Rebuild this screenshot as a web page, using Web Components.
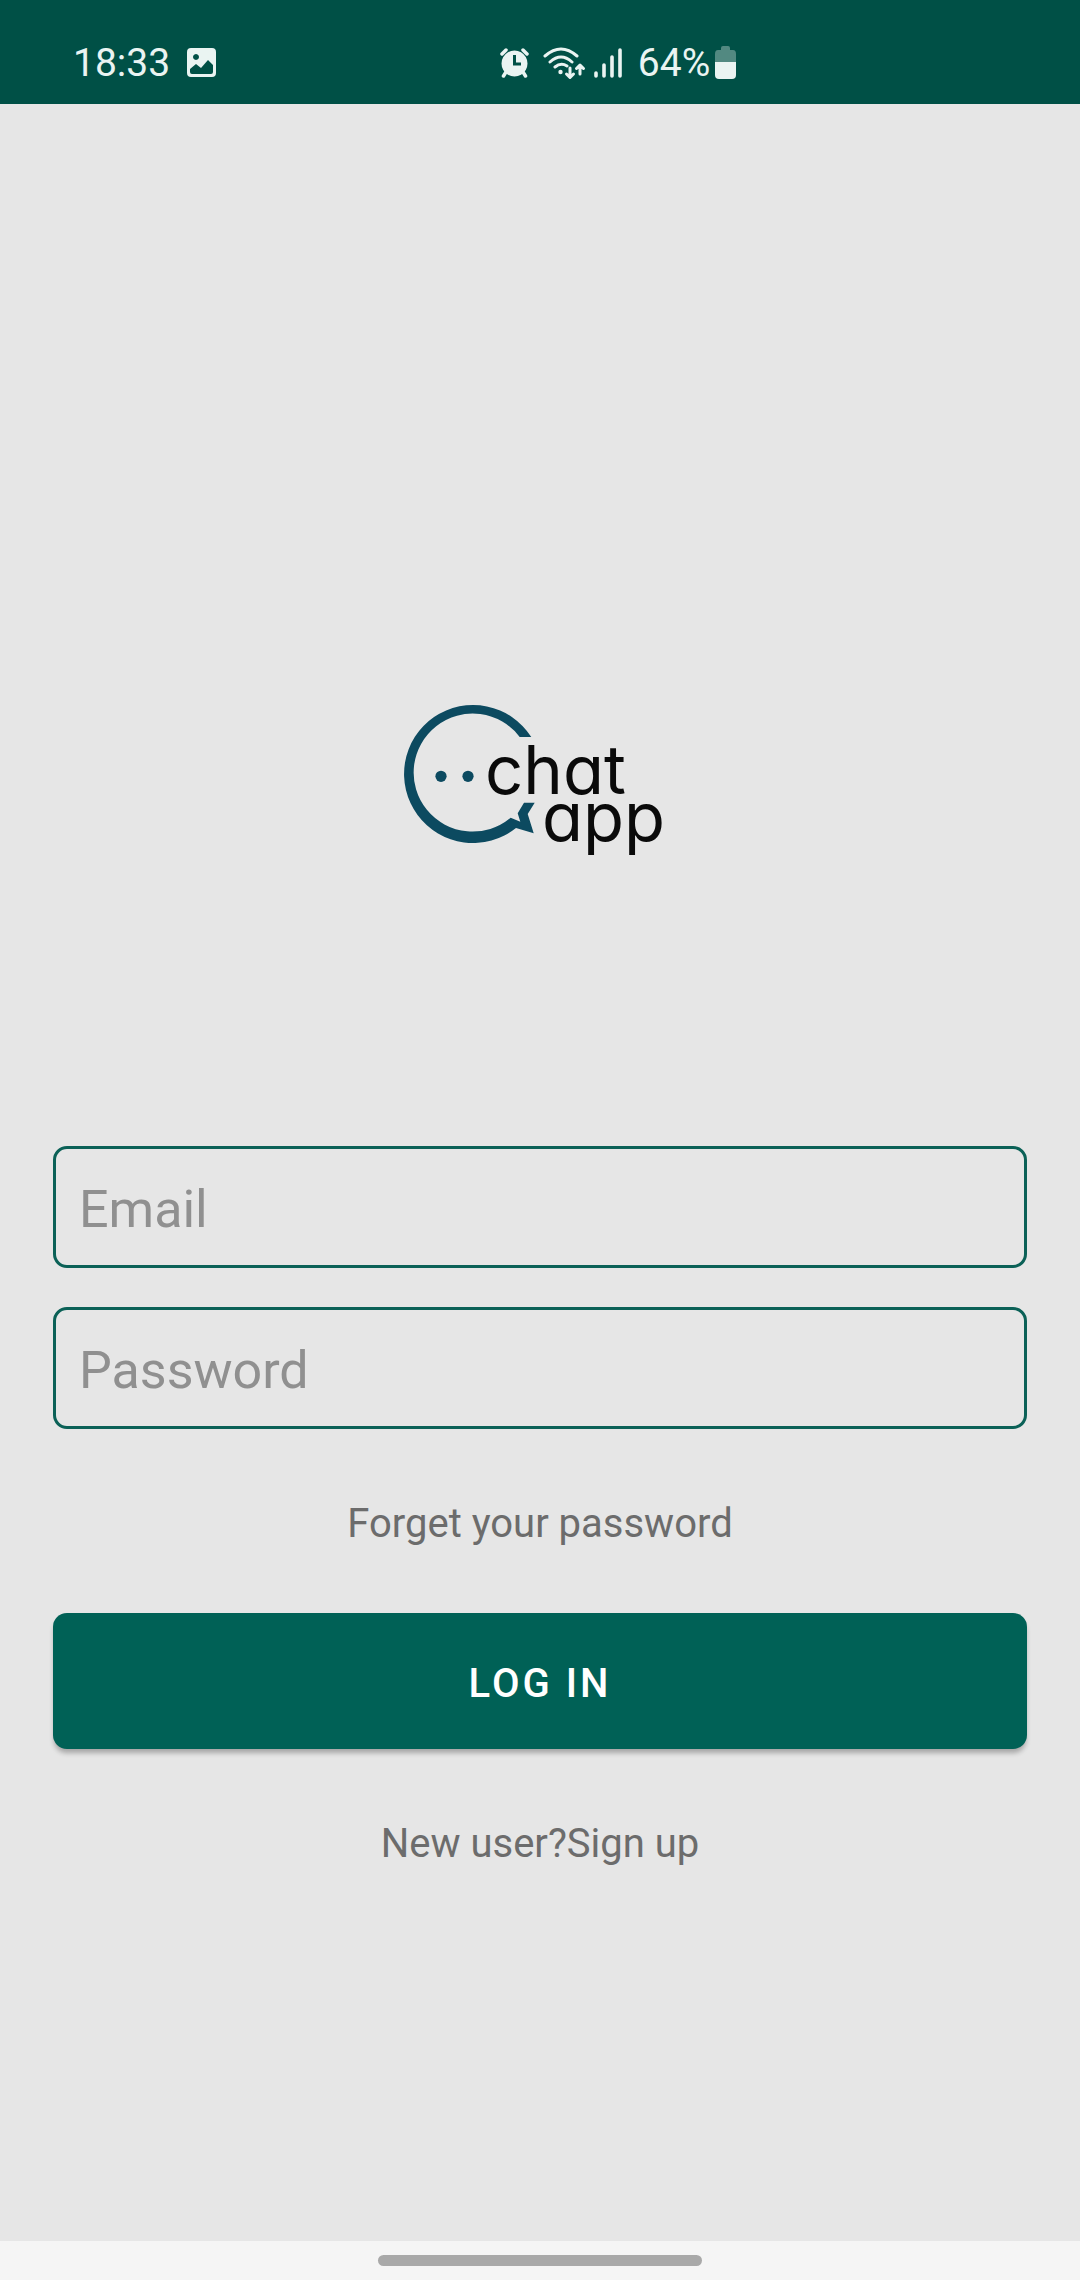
<!DOCTYPE html>
<html lang="en">
<head>
<meta charset="utf-8">
<meta name="viewport" content="width=device-width, initial-scale=1">
<title>Chat App</title>
<style>
  html, body { margin: 0; background: #e6e6e6; }
  body { font-family: Roboto, "Liberation Sans", sans-serif; }
</style>
</head>
<body>
<login-screen></login-screen>

<script>
const define = (name, html, setup) => {
  customElements.define(name, class extends HTMLElement {
    constructor() {
      super();
      this.attachShadow({ mode: "open" }).innerHTML = html;
    }
    connectedCallback() { if (setup) setup(this, this.shadowRoot); }
  });
};

define("status-bar", `
<style>
  :host { display: grid; grid-template-columns: 46fr 54fr; align-items: center; height: 104px; box-sizing: border-box;
          padding-top: 22px; background: #005046; color: #eaf4f2; font-size: 39px; line-height: 46px; }
  div { display: flex; align-items: center; }
  .left { padding-left: 73px; gap: 17px; }
  .right { padding-left: 3px; }
  svg { display: block; fill: currentColor; }
  .wifi { margin-left: 13px; }
  .signal { margin-left: 8px; margin-right: 15px; }
  .battery { margin-left: 5px; }
</style>
<div class="left">
  <span>18:33</span>
  <svg width="30" height="30" viewBox="0 0 30 30"><path fill-rule="evenodd" d="M4 0H25Q29 0 29 4V25Q29 29 25 29H4Q0 29 0 25V4Q0 0 4 0ZM9 6a3 3 0 1 0 .01 0ZM3 21V24Q3 26 5 26H24Q26 26 26 24V17L21 12L14 20L9 16Z"/></svg>
</div>
<div class="right">
  <svg width="30" height="30" viewBox="0 0 30 30"><path fill-rule="evenodd" d="M14.500 2.500a13 13 0 1 0 .01 0ZM13 7H16V14.500H21V17.500H13Z"/><path d="M2 6L6 2M23 2L27 6M6 24L3.500 28M23 24L25.500 28" fill="none" stroke="currentColor" stroke-width="3.500" stroke-linecap="round"/></svg>
  <svg class="wifi" width="43" height="33" viewBox="0 0 43 33"><g fill="none" stroke="currentColor" stroke-width="3" stroke-linecap="round" stroke-linejoin="round"><path d="M2 9Q18 -5 34 9M7 15Q18 5 29 15M12 20Q18 15 24 19"/><path d="M27 21V30M23.500 27L27 30.500L30.500 27M37 27V19M33.500 21.500L37 18L40.500 21.500"/></g><circle cx="17.500" cy="25" r="2.200"/></svg>
  <svg class="signal" width="29" height="32" viewBox="0 0 29 32"><g fill="none" stroke="currentColor" stroke-width="3.600" stroke-linecap="round"><path d="M2 26V29M10 18V29M18 10V29M26 3V29"/></g></svg>
  <span>64%</span>
  <svg class="battery" width="22" height="34" viewBox="0 0 22 34"><path opacity=".35" d="M6 4V2Q6 0 8 0H13Q15 0 15 2V4H18Q21 4 21 8V16H0V8Q0 4 3 4Z"/><path d="M0 16H21V29Q21 33 17 33H4Q0 33 0 29Z"/></svg>
</div>`);

define("app-logo", `
<style>
  :host { display: block; width: 300px; }
  svg { display: block; width: 100%; }
  text { font-family: Inter, Lato, sans-serif; font-size: 67px; font-feature-settings: "cv11"; font-optical-sizing: none; fill: #0a0a0a; }
</style>
<svg viewBox="0 0 300 180" role="img" aria-label="chat app">
  <g fill="#0c4a60">
    <path d="M141.300 47A69 69 0 1 0 126 138L143.700 143.300L137.700 124L144.700 112.700H134L127.700 123.300L130.300 131.700L120.700 127.700A59 59 0 1 1 129.700 47Z"/>
    <circle cx="51" cy="86.300" r="5.600"/><circle cx="78" cy="86.300" r="5.600"/>
  </g>
  <text x="95" y="104">chat</text>
  <text x="152" y="151">app</text>
</svg>`);

define("text-field", `
<style>
  :host { display: block; }
  input { display: block; box-sizing: border-box; width: 100%; height: 122px; margin: 0; padding: 4px 23px 0; border: 3px solid #0b6157;
          border-radius: 14px; background: transparent; color: #222; font: inherit; font-size: 52px; outline: none; }
  input::placeholder { color: #909090; opacity: 1; }
</style>
<input id="field">`, (host, root) => {
  const input = root.getElementById("field");
  input.type = host.getAttribute("type");
  input.placeholder = host.getAttribute("label");
  input.setAttribute("aria-label", host.getAttribute("label"));
});

define("primary-button", `
<style>
  :host { display: block; }
  button { display: block; width: 100%; height: 136px; margin: 0; padding: 4px 0 0; border: 0; border-radius: 14px; background: #006156; color: #fff;
           font: inherit; font-size: 40px; font-weight: 500; letter-spacing: 3px; text-transform: uppercase;
           box-shadow: 0 5px 5px -1px rgba(0, 0, 0, .28); }
</style>
<button type="button"><slot></slot></button>`);

define("text-link", `
<style>
  :host { display: block; text-align: center; font-size: 40px; line-height: 50px; }
  a { color: #6c6c6c; text-decoration: none; }
</style>
<a href="#"><slot></slot></a>`);

define("gesture-bar", `
<style>
  :host { display: flex; align-items: center; justify-content: center; height: 39px; background: #f5f5f5; }
  span { width: 30%; height: 11px; border-radius: 6px; background: #a9a9a9; }
</style>
<span></span>`);

define("login-screen", `
<style>
  :host { display: flex; flex-direction: column; min-height: 100vh; }
  main { flex: 1; display: flex; flex-direction: column; padding: 586px 53px 70px; }
  app-logo { align-self: center; margin-bottom: 276px; }
  form { display: flex; flex-direction: column; margin: 0; }
  .password { margin-top: 39px; }
  text-link { margin-top: 70px; }
  primary-button { margin-top: 64px; }
</style>
<status-bar></status-bar>
<main>
  <app-logo></app-logo>
  <form>
    <text-field type="email" label="Email"></text-field>
    <text-field class="password" type="password" label="Password"></text-field>
    <text-link>Forget your password</text-link>
    <primary-button>Log in</primary-button>
    <text-link>New user?Sign up</text-link>
  </form>
</main>
<gesture-bar></gesture-bar>`);
</script>
</body>
</html>
